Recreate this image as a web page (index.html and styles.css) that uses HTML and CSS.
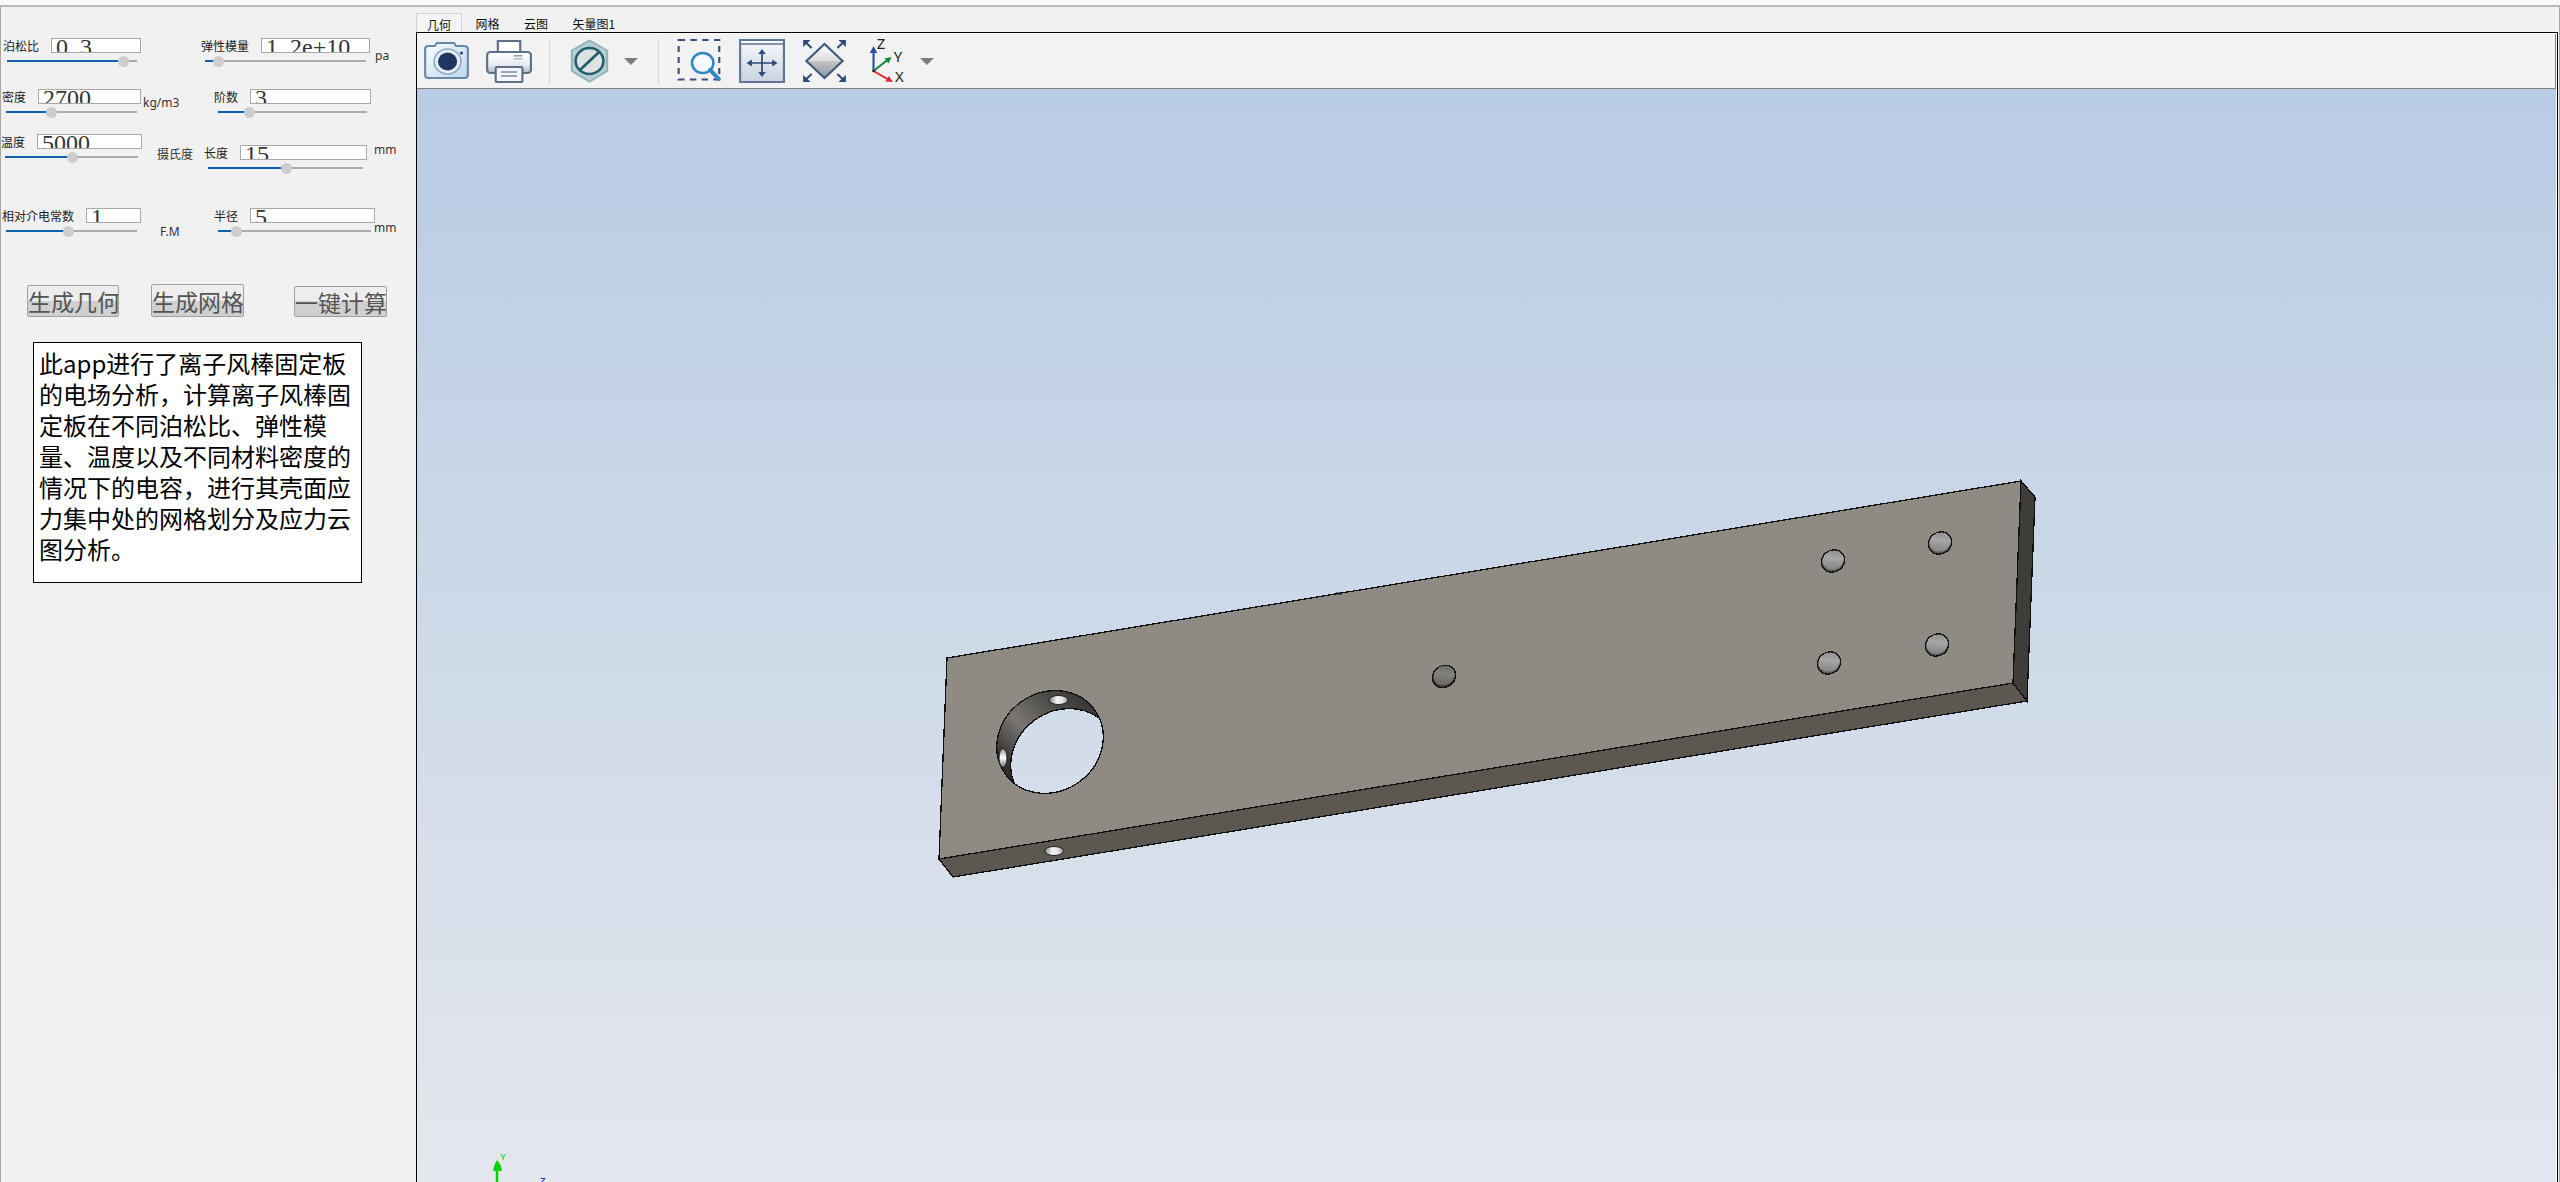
FILE: index.html
```html
<!DOCTYPE html>
<html lang="zh">
<head>
<meta charset="utf-8">
<title>离子风棒固定板</title>
<link rel="stylesheet" href="styles.css">
</head>
<body>
<div class="app">
  <div class="topstrip"></div>
  <div class="window">
    <aside class="panel">
      <div class="fields">
        <div class="row">
          <div class="field f1a">
            <div class="head"><span class="lbl">泊松比</span><span class="input">0<span class="dot">.</span>3</span></div>
            <div class="slider"><i class="fill" style="width:89%"></i><i class="thumb" style="left:89%"></i></div>
          </div>
          <div class="field f1b">
            <div class="head"><span class="lbl">弹性模量</span><span class="input">1<span class="dot">.</span>2e+10</span></div>
            <div class="slider"><i class="fill" style="width:8%"></i><i class="thumb" style="left:8%"></i></div>
          </div>
          <span class="unit u-pa">pa</span>
        </div>
        <div class="row">
          <div class="field f2a">
            <div class="head"><span class="lbl">密度</span><span class="input">2700</span></div>
            <div class="slider"><i class="fill" style="width:34%"></i><i class="thumb" style="left:34%"></i></div>
          </div>
          <span class="unit u-kg">kg/m3</span>
          <div class="field f2b">
            <div class="head"><span class="lbl">阶数</span><span class="input">3</span></div>
            <div class="slider"><i class="fill" style="width:21%"></i><i class="thumb" style="left:21%"></i></div>
          </div>
        </div>
        <div class="row">
          <div class="field f3a">
            <div class="head"><span class="lbl">温度</span><span class="input">5000</span></div>
            <div class="slider"><i class="fill" style="width:50%"></i><i class="thumb" style="left:50%"></i></div>
          </div>
          <span class="unit u-c">摄氏度</span>
          <div class="field f3b">
            <div class="head"><span class="lbl">长度</span><span class="input">15</span></div>
            <div class="slider"><i class="fill" style="width:50%"></i><i class="thumb" style="left:50%"></i></div>
          </div>
          <span class="unit u-mm1">mm</span>
        </div>
        <div class="row">
          <div class="field f4a">
            <div class="head"><span class="lbl">相对介电常数</span><span class="input">1</span></div>
            <div class="slider"><i class="fill" style="width:47%"></i><i class="thumb" style="left:47%"></i></div>
          </div>
          <span class="unit u-fm">F.M</span>
          <div class="field f4b">
            <div class="head"><span class="lbl">半径</span><span class="input">5</span></div>
            <div class="slider"><i class="fill" style="width:12%"></i><i class="thumb" style="left:12%"></i></div>
          </div>
          <span class="unit u-mm2">mm</span>
        </div>
      </div>
      <div class="actions">
        <button class="btn b1">生成几何</button>
        <button class="btn b2">生成网格</button>
        <button class="btn b3">一键计算</button>
      </div>
      <div class="desc">此app进行了离子风棒固定板<br>的电场分析，计算离子风棒固<br>定板在不同泊松比、弹性模<br>量、温度以及不同材料密度的<br>情况下的电容，进行其壳面应<br>力集中处的网格划分及应力云<br>图分析。</div>
    </aside>
    <main class="workspace">
      <nav class="tabs">
        <span class="tab active">几何</span>
        <span class="tab">网格</span>
        <span class="tab">云图</span>
        <span class="tab">矢量图1</span>
      </nav>
      <section class="frame">
        <div class="toolbar">
          <svg class="tool t-camera" viewBox="0 0 44 46" preserveAspectRatio="none">
            <defs><linearGradient id="camBody" x1="0" y1="0" x2="1" y2="1"><stop offset="0" stop-color="#fbfdff"/><stop offset="1" stop-color="#bcd6ee"/></linearGradient></defs>
            <path d="M2 11q0-3 3-3h6l2-3h16l2 3h7q4 0 4 3v26q0 3-3 3H5q-3 0-3-3z" fill="url(#camBody)" stroke="#6b87a8" stroke-width="2"/>
            <circle cx="23" cy="23.5" r="12.5" fill="#e6eef6" stroke="#8ea6c0" stroke-width="1.5"/>
            <circle cx="23" cy="23.5" r="9" fill="#1f3564"/>
            <circle cx="36" cy="15" r="1.5" fill="#2d4468"/>
          </svg>
          <svg class="tool t-print" viewBox="0 0 44 46" preserveAspectRatio="none">
            <defs><linearGradient id="prnBody" x1="0" y1="0" x2="0" y2="1"><stop offset="0" stop-color="#ffffff"/><stop offset=".6" stop-color="#e8ecf2"/><stop offset="1" stop-color="#aeb8c6"/></linearGradient></defs>
            <rect x="12" y="3" width="21" height="12" fill="#fff" stroke="#5c7088" stroke-width="2"/>
            <rect x="2" y="14" width="41" height="21" rx="3" fill="url(#prnBody)" stroke="#5c7088" stroke-width="2"/>
            <rect x="27" y="17" width="8" height="1.5" fill="#8d97a6"/><rect x="27" y="20" width="8" height="1.5" fill="#b2bac6"/>
            <rect x="10" y="29" width="25" height="15" rx="1" fill="#f4f6f9" stroke="#5c7088" stroke-width="2"/>
            <path d="M15 34h15M15 38h15" stroke="#98a4b4" stroke-width="2"/>
          </svg>
          <span class="sep s1"></span>
          <svg class="tool t-hex" viewBox="0 0 44 46" preserveAspectRatio="none">
            <path d="M22 2.500L38.500 12.500V33L22 43.500L5.500 33V12.500z" fill="#b9d0d3" stroke="#93b4b8" stroke-width="2"/>
            <circle cx="22" cy="23" r="13" fill="#dde2e2" stroke="#205f6b" stroke-width="2.4"/>
            <path d="M13 32L31 14" stroke="#205f6b" stroke-width="2.600"/>
          </svg>
          <i class="caret c1"></i>
          <span class="sep s2"></span>
          <svg class="tool t-zoom" viewBox="0 0 44 46" preserveAspectRatio="none">
            <rect x="2.500" y="2" width="38" height="39.500" fill="none" stroke="#3a4f78" stroke-width="2" stroke-dasharray="6 5"/>
            <circle cx="25" cy="25" r="10" fill="#f6fafd" stroke="#2f88c2" stroke-width="2.400"/>
            <path d="M32 32L40 41" stroke="#2f88c2" stroke-width="4" stroke-linecap="round"/>
          </svg>
          <svg class="tool t-pan" viewBox="0 0 44 46" preserveAspectRatio="none">
            <defs><linearGradient id="panBg" x1="0" y1="0" x2="0" y2="1"><stop offset="0" stop-color="#f8f9fb"/><stop offset="1" stop-color="#c9d2de"/></linearGradient></defs>
            <rect x="2" y="2" width="41" height="42" fill="url(#panBg)" stroke="#5f7599" stroke-width="2"/>
            <path d="M2 6h41" stroke="#5f7599" stroke-width="1.500"/>
            <path d="M22.500 13v24M10 25h25" stroke="#2d4a78" stroke-width="1.600"/>
            <path d="M22.500 11l-3.500 5h7zM22.500 39l-3.500-5h7zM8 25l5-3.500v7zM37 25l-5-3.500v7z" fill="#2d4a78"/>
          </svg>
          <svg class="tool t-fit" viewBox="0 0 44 46" preserveAspectRatio="none">
            <defs><linearGradient id="fitTop" x1="0" y1="0" x2="0" y2="1"><stop offset="0" stop-color="#fff"/><stop offset="1" stop-color="#dcdcdc"/></linearGradient><linearGradient id="fitBot" x1="0" y1="0" x2="0" y2="1"><stop offset="0" stop-color="#c4c4c4"/><stop offset="1" stop-color="#8f98a4"/></linearGradient></defs>
            <path d="M22 6L39 23H5z" fill="url(#fitTop)"/>
            <path d="M5 23H39L22 40z" fill="url(#fitBot)"/>
            <path d="M22 6L39 23L22 40L5 23z" fill="none" stroke="#44597e" stroke-width="2"/>
            <path d="M3 3l7 7M41 3l-7 7M3 43l7-7M41 43l-7-7" stroke="#2d4a78" stroke-width="1.800"/>
            <path d="M2 2h7l-7 7zM42 2h-7l7 7zM2 44h7l-7-7zM42 44h-7l7-7z" fill="#2d4a78"/>
          </svg>
          <svg class="tool t-axis" viewBox="0 0 44 46" preserveAspectRatio="none">
            <path d="M8 33V13" stroke="#2b4f9e" stroke-width="2"/><path d="M8 8l-3.500 7h7z" fill="#2b4f9e"/>
            <path d="M8 33L21 22" stroke="#178a3c" stroke-width="2"/><path d="M25 19l-7 1.500 4 5z" fill="#178a3c"/>
            <path d="M8 33L21 41" stroke="#e02a2a" stroke-width="2"/><path d="M26 44l-7-.5 3.500-5.500z" fill="#e02a2a"/>
            <circle cx="8" cy="33" r="1.300" fill="#222"/>
            <text class="ax" x="11" y="11">Z</text><text class="ax" x="27" y="24">Y</text><text class="ax" x="28" y="44">X</text>
          </svg>
          <i class="caret c2"></i>
        </div>
        <div class="viewport">
          <svg class="scene" viewBox="417 89 2139 1093">
            <defs>
              <mask id="plateMask" maskUnits="userSpaceOnUse" x="900" y="450" width="1200" height="450">
                <rect x="900" y="450" width="1200" height="450" fill="#fff"/>
                <ellipse cx="1050" cy="742" rx="55" ry="49.500" transform="rotate(-35 1050 742)" fill="#000"/>
              </mask>
              <mask id="wallMask" maskUnits="userSpaceOnUse" x="980" y="680" width="140" height="130">
                <ellipse cx="1050" cy="742" rx="55" ry="49.500" transform="rotate(-35 1050 742)" fill="#fff"/>
                <ellipse cx="1064" cy="760" rx="55" ry="49.500" transform="rotate(-35 1064 760)" fill="#000"/>
              </mask>
              <clipPath id="outerClip"><ellipse cx="1050" cy="742" rx="55" ry="49.500" transform="rotate(-35 1050 742)"/></clipPath>
              <linearGradient id="wallGrad" gradientUnits="userSpaceOnUse" x1="1100" y1="690" x2="1005" y2="785">
                <stop offset="0" stop-color="#2e2d2b"/><stop offset=".3" stop-color="#4a4846"/><stop offset=".6" stop-color="#7a7773"/><stop offset=".85" stop-color="#3c3a38"/><stop offset="1" stop-color="#1e1d1c"/>
              </linearGradient>
              <linearGradient id="whiteH" x1="0" y1="0" x2="1" y2="0"><stop offset="0" stop-color="#777"/><stop offset=".4" stop-color="#f4f4f4"/><stop offset=".7" stop-color="#e4e4e4"/><stop offset="1" stop-color="#999"/></linearGradient>
              <linearGradient id="whiteV" x1="0" y1="0" x2="0" y2="1"><stop offset="0" stop-color="#999"/><stop offset=".5" stop-color="#fff"/><stop offset="1" stop-color="#666"/></linearGradient>
              <linearGradient id="holeGrad" x1="0" y1="1" x2="1" y2="0"><stop offset="0" stop-color="#777"/><stop offset=".55" stop-color="#a6a6a6"/><stop offset="1" stop-color="#828282"/></linearGradient>
              <linearGradient id="holeDark" x1="0" y1="1" x2="1" y2="0"><stop offset="0" stop-color="#5c5b59"/><stop offset=".55" stop-color="#85827d"/><stop offset="1" stop-color="#5e5d5b"/></linearGradient>
              <g id="hole">
                <ellipse rx="12" ry="10.800" transform="rotate(-35)" fill="#5a5a58"/>
                <ellipse cx="1" cy="-1" rx="11" ry="9.800" transform="rotate(-35)" fill="url(#holeGrad)"/>
                <ellipse rx="12" ry="10.800" transform="rotate(-35)" fill="none" stroke="#141414" stroke-width="1.300" shape-rendering="crispEdges"/>
              </g>
              <g id="holeD">
                <ellipse rx="12" ry="10.800" transform="rotate(-35)" fill="#3a3a38"/>
                <ellipse cx="1" cy="-1" rx="11" ry="9.800" transform="rotate(-35)" fill="url(#holeDark)"/>
                <ellipse rx="12" ry="10.800" transform="rotate(-35)" fill="none" stroke="#141414" stroke-width="1.300" shape-rendering="crispEdges"/>
              </g>
            </defs>
            <polygon class="edge" points="939,859 2013,683 2027,701 953,877" fill="#5c5851"/>
            <polygon class="edge" points="2021,481 2035,497 2027,701 2013,683" fill="#3f3d3a"/>
            <polygon points="947,658 2021,481 2013,683 939,859" fill="#8f8a83" mask="url(#plateMask)"/>
            <path class="edge" d="M947 658L2021 481L2013 683L939 859z" fill="none"/>
            <path d="M1336 593.500h6" stroke="#111" stroke-width="2"/>
            <rect x="980" y="680" width="140" height="130" fill="url(#wallGrad)" mask="url(#wallMask)"/>
            <g clip-path="url(#outerClip)">
              <ellipse class="edge" cx="1064" cy="760" rx="55" ry="49.500" transform="rotate(-35 1064 760)" fill="none"/>
            </g>
            <ellipse class="edge" cx="1050" cy="742" rx="55" ry="49.500" transform="rotate(-35 1050 742)" fill="none"/>
            <ellipse cx="1058.500" cy="700" rx="9.500" ry="4.500" fill="url(#whiteH)" stroke="#1c1c1c" stroke-width="1"/>
            <ellipse cx="1003" cy="758" rx="4" ry="9.500" fill="url(#whiteV)" stroke="#1c1c1c" stroke-width="1"/>
            <ellipse cx="1054" cy="851" rx="9.500" ry="4.500" fill="url(#whiteH)" stroke="#1c1c1c" stroke-width="1"/>
            <use href="#holeD" x="1444" y="676.500"/>
            <use href="#hole" x="1833" y="561"/>
            <use href="#hole" x="1940" y="543"/>
            <use href="#hole" x="1829" y="663"/>
            <use href="#hole" x="1937" y="645"/>
            <path d="M497 1182V1170" stroke="#00d400" stroke-width="2.500"/>
            <path d="M497 1160l-2.500 5-1.500 6h9l-1.500-6z" fill="#00d400"/>
            <text class="tri y" x="500" y="1160">Y</text>
            <text class="tri z" x="540" y="1184">Z</text>
          </svg>
        </div>
      </section>
    </main>
  </div>
</div>
</body>
</html>
```

FILE: styles.css
```css
* { box-sizing: border-box; }
html, body { margin: 0; height: 100%; overflow: hidden; }
body { background: #f1f1f1; font-family: "Noto Sans", "Noto Sans CJK SC", sans-serif; color: #222; }

.app { display: flex; flex-direction: column; height: 1182px; }
.topstrip { height: 7px; flex: none; background: #fafafa; border-bottom: 2px solid #b9b9b9; }
.window { flex: 1; display: flex; min-height: 0; border-right: 1px solid #a6a6a6; }

/* left panel */
.panel { width: 416px; flex: none; border-left: 1px solid #a6a6a6; background: #f1f1f1; }
.fields { padding-top: 31px; display: grid; grid-template-rows: 51px 45px 74px 76px; }
.row { display: flex; align-items: flex-start; }
.field { flex: none; }
.head { display: flex; align-items: flex-start; gap: 12px; height: 15px; }
.lbl { font: 12px/15px "Noto Sans CJK SC", sans-serif; color: #222; white-space: nowrap; flex: none; }
.input {
  flex: 1; min-width: 0; height: 15px; padding-left: 4px; overflow: hidden;
  background: #fff; border: 1px solid #a8a8a8;
  font: 24px/16px "Liberation Serif", serif; color: #333; white-space: nowrap;
}
.dot { margin: 0 3px; }
.slider { position: relative; height: 11px; margin: 3px 4px 0; }
.slider::before { content: ""; position: absolute; left: 0; right: 0; top: 4px; height: 2px; background: #ababab; }
.fill { position: absolute; left: 0; top: 4px; height: 2px; background: #0f62b0; }
.thumb { position: absolute; top: 0; width: 11px; height: 11px; margin-left: -5px; border-radius: 50%; background: #cdcdcd; }
.unit { flex: none; font: 12px/15px "Noto Sans", sans-serif; color: #333; white-space: nowrap; }

.f1a { margin-left: 2px; width: 138px; }
.f1b { margin-left: 60px; width: 169px; }
.u-pa { margin: 10px 0 0 5px; }
.f2a { margin-left: 1px; width: 139px; }
.u-kg { margin: 6px 0 0 2px; width: 71px; }
.f2b { width: 157px; }
.f3a { width: 141px; }
.u-c { margin: 12px 0 0 15px; width: 47px; font-family: "Noto Sans CJK SC", sans-serif; }
.f3b { margin-top: 11px; width: 163px; }
.u-mm1 { margin: 8px 0 0 7px; }
.f4a { margin-left: 1px; width: 139px; }
.u-fm { margin: 16px 0 0 19px; width: 54px; }
.f4b { width: 161px; }
.u-mm2 { margin: 12px 0 0 -1px; }

/* buttons */
.actions { display: flex; align-items: flex-start; margin-top: 0; height: 58px; }
.btn {
  flex: none; width: 92px; padding: 0; overflow: hidden; white-space: nowrap;
  border: 1px solid #a0a0a0; border-radius: 2px;
  background: linear-gradient(#ededed 0 50%, #d0d0d0 50% 100%);
  font: 23px/28px "Noto Sans CJK SC", sans-serif; color: #555;
}
.b1 { margin: 1px 0 0 26px; height: 32px; }
.b2 { margin: 0 0 0 32px; width: 93px; height: 33px; }
.b3 { margin: 2px 0 0 50px; width: 93px; height: 31px; }

.desc {
  margin-left: 32px; width: 329px; height: 241px; padding: 4px 0 0 5px;
  background: #fff; border: 1px solid #000;
  font: 24px/31px "Noto Sans CJK SC", sans-serif; color: #000; white-space: nowrap;
}

/* workspace */
.workspace { flex: 1; min-width: 0; margin-right: 1px; display: flex; flex-direction: column; }
.tabs { flex: none; height: 25px; padding-top: 6px; display: flex; gap: 2.5px; }
.tab { height: 19px; padding: 0 11px; font: 12px/21px "Noto Sans CJK SC", sans-serif; color: #111; white-space: nowrap; }
.tab.active { background: #f5f5f5; border: 1px solid #d4d4d4; border-bottom: 0; padding: 0 10px; }
.frame { flex: 1; min-height: 0; display: flex; flex-direction: column; border: 1px solid #000; border-bottom: 0; background: #fff; padding: 1px 1px 0 0; }
.toolbar { flex: none; height: 55px; display: flex; align-items: center; padding-left: 6px; background: #f2f2f2; border-right: 1px solid #808080; border-bottom: 1px solid #808080; }
.tool { flex: none; width: 47px; height: 46px; }
.t-print { margin-left: 15px; }
.t-hex { margin-left: 16px; }
.t-zoom { margin-left: 17px; }
.t-pan { margin-left: 15px; }
.t-fit { margin-left: 16px; }
.t-axis { margin-left: 17px; }
.sep { flex: none; width: 1px; height: 46px; background: #d6d6d6; }
.s1 { margin-left: 17px; }
.s2 { margin-left: 20px; }
.caret { flex: none; width: 0; height: 0; border-left: 7px solid transparent; border-right: 7px solid transparent; border-top: 7px solid #7d7d7d; }
.c1 { margin-left: 11px; }
.c2 { margin-left: 8px; }
.ax { font: 14px "Noto Sans", sans-serif; fill: #222; }

.viewport { flex: 1; min-height: 0; position: relative; background: linear-gradient(#b8cce4, #e4e7ed); overflow: hidden; }
.scene { position: absolute; inset: 0; width: 100%; height: 100%; display: block; }
.edge { stroke: #111; stroke-width: 1.3; shape-rendering: crispEdges; }
.tri { font: 9px "Liberation Sans", sans-serif; }
.tri.y { fill: #00d400; }
.tri.z { fill: #0000e0; }
```
